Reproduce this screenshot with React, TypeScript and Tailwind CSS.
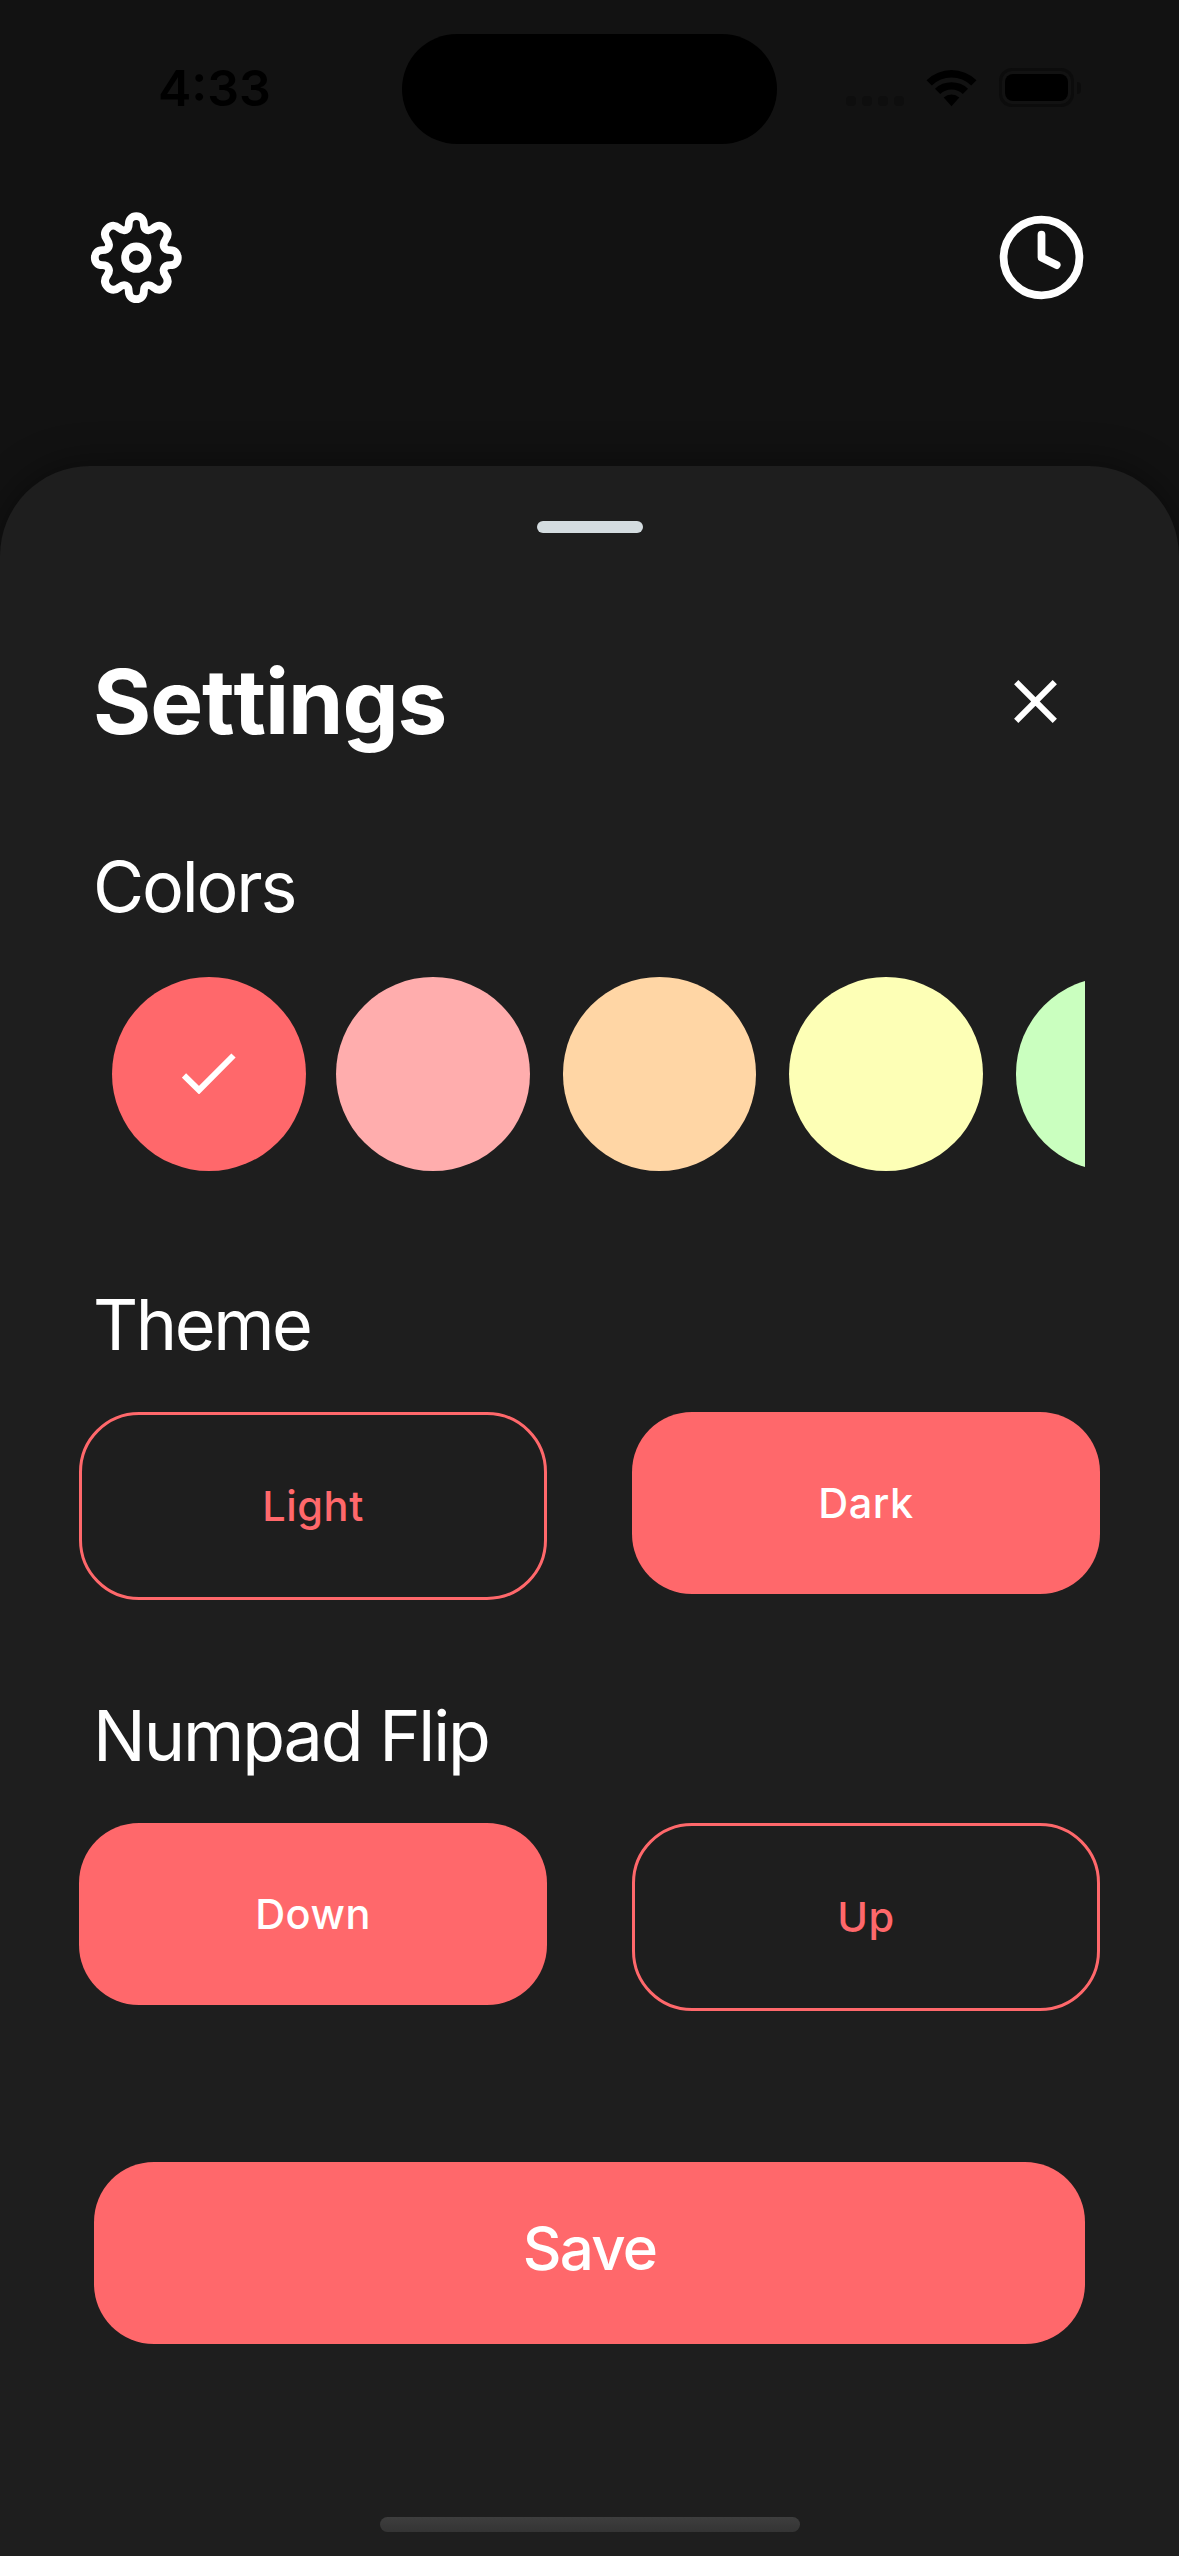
import { Clock } from "lucide-react";
import type { ReactNode } from "react";

const swatches = ["bg-[#ff686b]", "bg-[#ffadad]", "bg-[#ffd6a5]", "bg-[#fdffb6]", "bg-[#caffbf]"];

function Choice({ active, children }: { active?: boolean; children: ReactNode }) {
  return (
    <button
      className={
        active
          ? "flex h-[182px] w-[468px] items-center justify-center rounded-[60px] bg-[#ff686b] text-[41.5px] font-medium tracking-[0.5px] text-white"
          : "flex h-[188px] w-[468px] items-center justify-center rounded-[60px] border-[3px] border-[#ff686b] text-[41.5px] font-medium tracking-[0.6px] text-[#ff686b]"
      }
    >
      {children}
    </button>
  );
}

function GearIcon() {
  return (
    <svg className="size-[92px]" viewBox="-0.300 0.300 92 92" fill="none" stroke="white" strokeWidth="7.8" strokeLinejoin="round">
      <circle cx="46" cy="46" r="11.2" />
      <path d="M46 4.500C50.500 4.500 53.500 8 53.500 12C53.500 18.500 58 20.500 63 16.500C67 13 71 13 74.500 16.500C78.500 20.500 78 24.500 75 28.500C71.500 33.500 73.500 38.500 80 38.500C84.500 38.500 87.500 41.500 87.500 46C87.500 50.500 84.500 53.500 80 53.500C73.500 53.500 71.500 58.500 75 63.500C78 67.500 78.500 71.500 74.500 75.500C71 79 67 79 63 75.500C58 71.500 53.500 73.500 53.500 80C53.500 84 50.500 87.500 46 87.500C41.500 87.500 38.500 84 38.500 80C38.500 73.500 34 71.500 29 75.500C25 79 21 79 17.500 75.500C13.500 71.500 14 67.500 17 63.500C20.500 58.500 18.500 53.500 12 53.500C7.500 53.500 4.500 50.500 4.500 46C4.500 41.500 7.500 38.500 12 38.500C18.500 38.500 20.500 33.500 17 28.500C14 24.500 13.500 20.500 17.500 16.500C21 13 25 13 29 16.500C34 20.500 38.500 18.500 38.500 12C38.500 8 41.500 4.500 46 4.500Z" />
    </svg>
  );
}

export default function App() {
  return (
    <div className="flex h-[2556px] w-[1179px] flex-col overflow-hidden bg-[#121212] font-['Inter',sans-serif] text-white">
      <header className="h-[466px] shrink-0">
        <div className="flex h-[178px] items-start pt-[34px]">
          <div className="-mt-[2px] flex h-[110px] w-[402px] items-center pt-px pl-[158px] text-[50px] leading-none font-semibold text-black">
            4:33
          </div>
          <div className="h-[110px] w-[375px] rounded-full bg-black" />
          <div className="flex items-start pt-[34px] pl-[69px]">
            <div className="flex gap-[6px] pt-[28px]">
              {[0, 1, 2, 3].map((i) => (
                <span key={i} className="size-[10px] rounded-[4px] bg-[#0e0e0e]" />
              ))}
            </div>
            <svg className="mt-px ml-[22px] h-[38px] w-[51px]" viewBox="0 0 51 38" fill="black">
              <path d="M0.500 11.200a36 36 0 0 1 50 0L45.200 16.500a28 28 0 0 0-39.400 0Z" />
              <path d="M9 19.700a24 24 0 0 1 33 0L36.800 25a16.300 16.300 0 0 0-22.600 0Z" />
              <path d="M17.700 28.400a12 12 0 0 1 15.600 0L25.500 37.300Z" />
            </svg>
            <div className="ml-[22px] flex items-center">
              <div className="h-[39px] w-[75px] rounded-[13px] border-[3px] border-[#0c0c0c] p-[3px]">
                <div className="size-full rounded-[8px] bg-black" />
              </div>
              <div className="ml-[3px] h-[12px] w-[4px] rounded-r-full bg-[#0c0c0c]" />
            </div>
          </div>
        </div>
        <div className="flex items-start justify-between pt-[34px] pr-[92px] pl-[90px]">
          <GearIcon />
          <Clock size={91} strokeWidth={2.05} />
        </div>
      </header>

      <main className="flex flex-1 flex-col rounded-t-[90px] bg-[#1e1e1e] shadow-[0_0_40px_rgba(0,0,0,0.45)]">
        <div className="mt-[55px] h-[12px] w-[106px] self-center rounded-[6px] bg-[#d4dce0]" />

        <div className="mt-[113px] flex h-[110px] items-center justify-between pr-[122px] pl-[93px]">
          <h1 className="text-[89px] leading-none font-bold tracking-[-1.1px] [font-feature-settings:'calt'_0,'liga'_0] [font-kerning:none]">
            Settings
          </h1>
          <svg className="size-[43px]" viewBox="0 0 43 43" stroke="white" strokeWidth="6">
            <path d="M2.200 2.200l38.600 38.600M40.800 2.200L2.200 40.800" />
          </svg>
        </div>

        <section className="mt-[86px]">
          <h2 className="pl-[93px] text-[70px] leading-[90px] tracking-[-2.200px]">Colors</h2>
          <div className="mt-[45px] ml-[94px] flex w-[991px] overflow-hidden pl-[18px]">
            {swatches.map((color, i) => (
              <div
                key={color}
                className={`${color} flex h-[194px] w-[193.5px] shrink-0 items-center justify-center rounded-full ${i === 0 ? "mr-[30.5px]" : "mr-[33px]"}`}
              >
                {i === 0 && (
                  <svg className="-mt-[2px] h-[41px] w-[54px]" viewBox="0 0 54 41" fill="none" stroke="white" strokeWidth="6">
                    <path d="M2 22.500L17 37.200L51.500 2.500" />
                  </svg>
                )}
              </div>
            ))}
          </div>
        </section>

        <section className="mt-[109px]">
          <h2 className="pl-[93px] text-[70px] leading-[90px] tracking-[-2.400px]">Theme</h2>
          <div className="mt-[42px] flex h-[188px] items-start justify-between px-[79px]">
            <Choice>Light</Choice>
            <Choice active>Dark</Choice>
          </div>
        </section>

        <section className="mt-[91px]">
          <h2 className="pl-[93px] text-[70px] leading-[90px] tracking-[-2.100px]">Numpad Flip</h2>
          <div className="mt-[42px] flex h-[188px] items-start justify-between px-[79px]">
            <Choice active>Down</Choice>
            <Choice>Up</Choice>
          </div>
        </section>

        <button className="mt-[151px] ml-[94px] flex h-[182px] w-[991px] shrink-0 items-center justify-center rounded-[60px] bg-[#ff686b] pb-[10px] text-[60px] font-medium tracking-[-1.700px]">
          Save
        </button>

        <div className="mt-[173px] h-[15px] w-[420px] shrink-0 self-center rounded-full bg-linear-to-b from-[#3e3e3e] to-[#343434]" />
      </main>
    </div>
  );
}
